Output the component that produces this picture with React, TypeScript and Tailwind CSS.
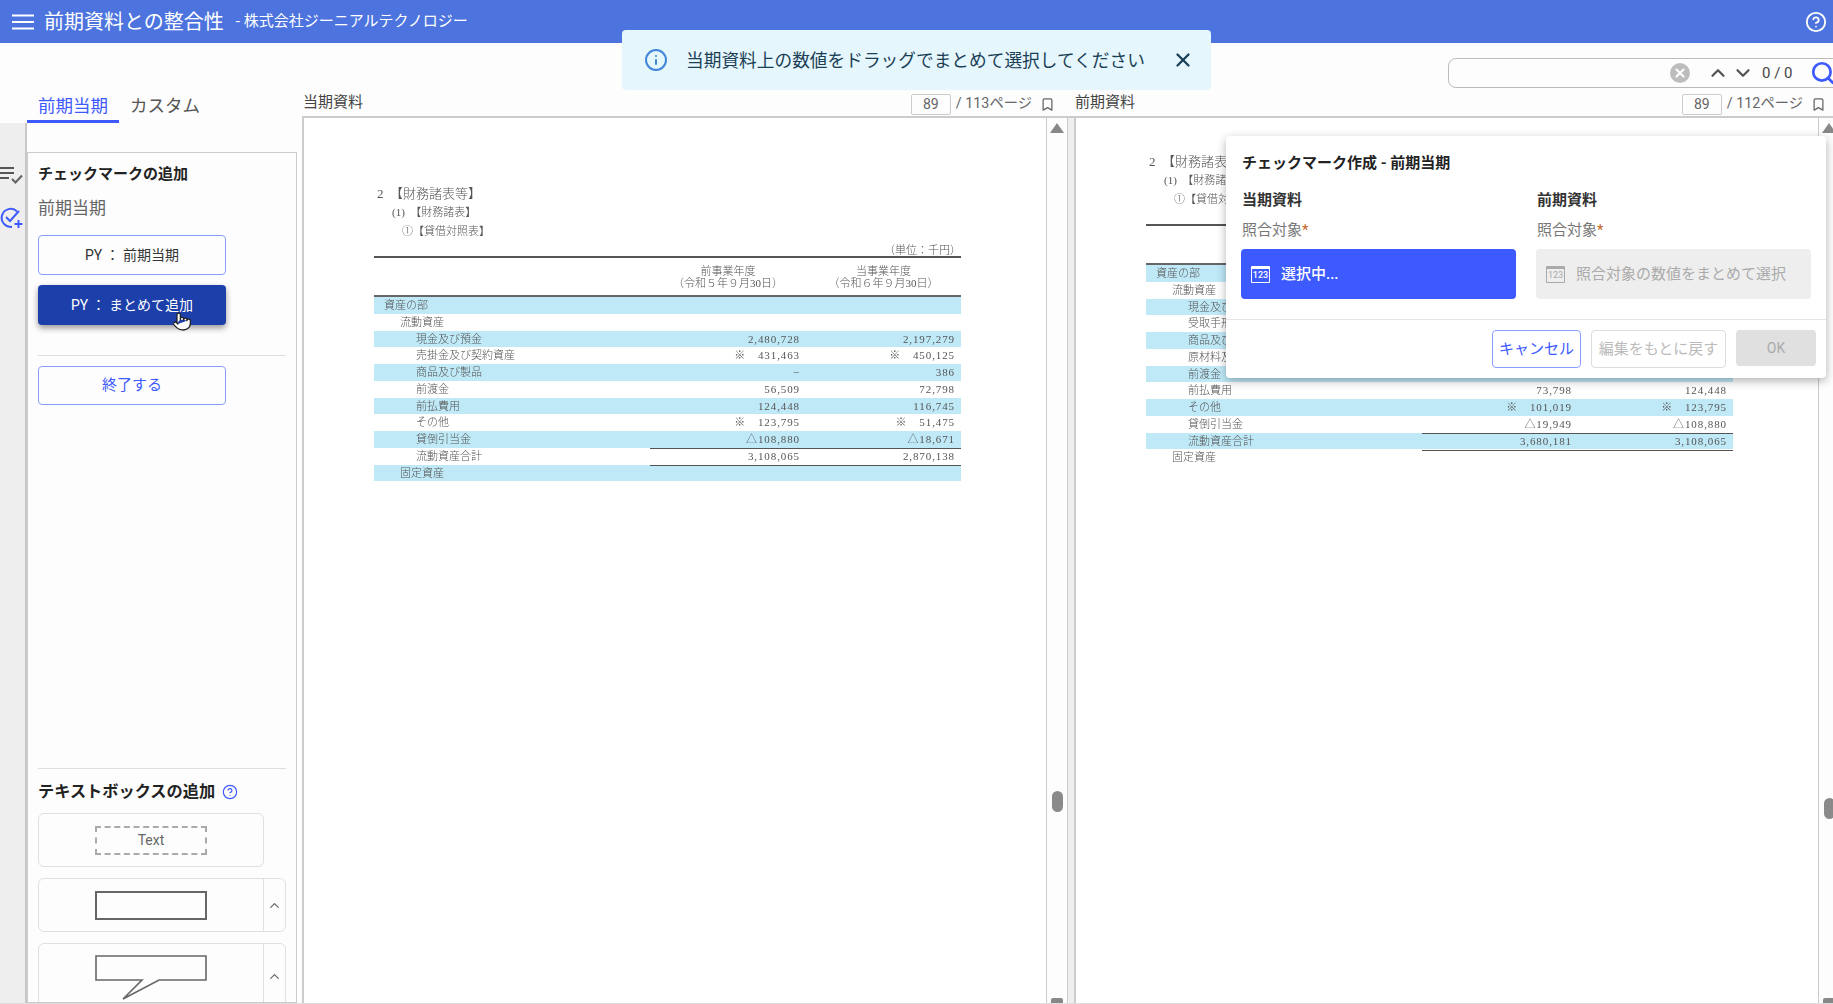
import { Bookmark, ChevronDown, ChevronUp, CircleHelp, Info, Pointer, Search, X } from "lucide-react";

type Row = { label: string; level: number; a?: string; b?: string; ruled?: boolean };

const currentRows: Row[] = [
  { label: "資産の部", level: 0 },
  { label: "流動資産", level: 1 },
  { label: "現金及び預金", level: 2, a: "2,480,728", b: "2,197,279" },
  { label: "売掛金及び契約資産", level: 2, a: "※　431,463", b: "※　450,125" },
  { label: "商品及び製品", level: 2, a: "−", b: "386" },
  { label: "前渡金", level: 2, a: "56,509", b: "72,798" },
  { label: "前払費用", level: 2, a: "124,448", b: "116,745" },
  { label: "その他", level: 2, a: "※　123,795", b: "※　51,475" },
  { label: "貸倒引当金", level: 2, a: "△108,880", b: "△18,671", ruled: true },
  { label: "流動資産合計", level: 2, a: "3,108,065", b: "2,870,138", ruled: true },
  { label: "固定資産", level: 1 },
];

const priorRows: Row[] = [
  { label: "資産の部", level: 0 },
  { label: "流動資産", level: 1 },
  { label: "現金及び預金", level: 2 },
  { label: "受取手形", level: 2 },
  { label: "商品及び製品", level: 2 },
  { label: "原材料及び貯蔵品", level: 2 },
  { label: "前渡金", level: 2 },
  { label: "前払費用", level: 2, a: "73,798", b: "124,448" },
  { label: "その他", level: 2, a: "※　101,019", b: "※　123,795" },
  { label: "貸倒引当金", level: 2, a: "△19,949", b: "△108,880", ruled: true },
  { label: "流動資産合計", level: 2, a: "3,680,181", b: "3,108,065", ruled: true },
  { label: "固定資産", level: 1 },
];

function Statement({ rows }: { rows: Row[] }) {
  return (
    <div className="w-[587px] font-['Liberation_Serif','Noto_Sans_CJK_JP',serif] font-light text-[11px] text-[#555] blur-[0.3px]">
      <div className="h-[19px] pl-[3px] text-[13px] leading-[20px]">2　【財務諸表等】</div>
      <div className="h-[19px] pl-[18px] leading-[19px]">(1)　【財務諸表】</div>
      <div className="h-[19px] pl-[28px] leading-[19px]">①【貸借対照表】</div>
      <div className="mt-[2px] h-[13px] text-right leading-[15px]">（単位：千円）</div>
      <div className="grid h-[41px] grid-cols-[276px_156px_155px] border-y-2 border-b-[#666] border-t-[#555] pt-[7px] text-center leading-[12px]">
        <div />
        <div>前事業年度<br />（令和５年９月30日）</div>
        <div>当事業年度<br />（令和６年９月30日）</div>
      </div>
      {rows.map((r, i) => (
        <div key={r.label} className={`grid h-[16.75px] grid-cols-[276px_156px_155px] leading-[17px] ${i % 2 === 0 ? "bg-[#bfe9f7]" : "bg-white"}`}>
          <div className={r.level === 0 ? "pl-[10px]" : r.level === 1 ? "pl-[26px]" : "pl-[42px]"}>{r.label}</div>
          <div className={`pr-[6px] text-right tracking-[0.9px] ${r.ruled ? "border-b border-[#555]" : ""}`}>{r.a}</div>
          <div className={`pr-[6px] text-right tracking-[0.9px] ${r.ruled ? "border-b border-[#555]" : ""}`}>{r.b}</div>
        </div>
      ))}
    </div>
  );
}

function PageBar({ title, total, right }: { title: string; total: number; right: string }) {
  return (
    <div className={`flex h-[24px] items-center justify-between pl-[1px] ${right}`}>
      <span className="-mt-[3px] text-[15px] text-[#444]">{title}</span>
      <div className="flex items-center">
        <div className="flex h-[21px] w-[40px] items-center justify-center rounded-[2px] border border-[#ccc] text-[14px] text-[#666]">89</div>
        <span className="ml-[5px] text-[14.3px] text-[#666]">/ {total}ページ</span>
        <Bookmark className="ml-[8px] h-[15px] w-[15px] text-[#666]" strokeWidth={2} />
      </div>
    </div>
  );
}

function ScrollTrack({ thumbTop }: { thumbTop: string }) {
  return (
    <div className="flex w-[21px] shrink-0 flex-col items-center border-l border-[#ccc] bg-[#fdfdfd]">
      <svg className="mt-[5px] shrink-0" width="14" height="10" viewBox="0 0 14 10">
        <path d="M7 0 L14 10 L0 10 Z" fill="#888" />
      </svg>
      <div className={`h-[21px] w-[11px] shrink-0 rounded-full bg-[#8a8a8a] ${thumbTop}`} />
      <div className="mt-auto h-[5px] w-[12px] rounded-t-[2px] bg-[#888]" />
    </div>
  );
}

function Icon123({ className }: { className: string }) {
  return (
    <span className={`flex h-[17px] w-[19px] items-center justify-center rounded-[1px] border-x-[1.5px] border-b-[1.5px] border-t-[3px] text-[9px] leading-none ${className}`}>
      123
    </span>
  );
}

function ShapeCard({ children, size }: { children: React.ReactNode; size: string }) {
  return (
    <div className={`flex w-[248px] shrink-0 rounded-[6px] border border-[#e0e0e0] ${size}`}>
      <div className="flex flex-1 justify-center">{children}</div>
      <div className="flex w-[22px] items-center justify-center border-l border-[#e0e0e0]">
        <ChevronUp className="h-[15px] w-[15px] text-[#666]" strokeWidth={2} />
      </div>
    </div>
  );
}

export default function App() {
  return (
    <div className="relative box-border flex h-[1004px] w-[1833px] flex-col overflow-hidden border-b border-[#ddd] bg-[#fdfdfd] font-['Roboto','Noto_Sans_CJK_JP',sans-serif]">
      {/* header */}
      <header className="flex h-[43px] shrink-0 items-center bg-[#4d74de] text-white">
        <svg className="ml-[12px]" width="22" height="16" viewBox="0 0 22 16" stroke="white" strokeWidth="2">
          <path d="M0 1.5h22M0 8h22M0 14.5h22" />
        </svg>
        <span className="ml-[10px] text-[20px]">前期資料との整合性</span>
        <span className="ml-[12px] text-[15px]">- 株式会社ジーニアルテクノロジー</span>
        <CircleHelp className="ml-auto mr-[6px] h-[22px] w-[22px]" strokeWidth={2} />
      </header>

      <div className="flex min-h-0 flex-1">
        {/* sidebar */}
        <aside className="flex w-[302px] shrink-0 flex-col">
          <div className="flex h-[80px] shrink-0 items-end pl-[27px]">
            <div className="h-[37px] w-[92px] border-b-[3px] border-[#3d5afe] pt-[5px] text-center text-[17.5px] leading-[30px] text-[#3d5afe]">前期当期</div>
            <div className="ml-[11px] h-[37px] pt-[5px] text-[17.5px] leading-[30px] text-[#555]">カスタム</div>
          </div>
          <div className="flex min-h-0 flex-1">
            <div className="box-content flex w-[25px] shrink-0 flex-col border-r-2 border-[#c8c8c8] bg-[#eee]">
              <svg className="mt-[42px]" width="24" height="20" viewBox="0 0 24 20" fill="none" stroke="#555" strokeWidth="2">
                <path d="M0 3h14M0 8h14M0 13h9" />
                <path d="M12 14l3.5 3.5L22 10.5" strokeWidth="2.2" stroke="#666" />
              </svg>
              <svg className="mt-[21px]" width="24" height="24" viewBox="0 0 24 24" fill="none" stroke="#3d5afe" strokeWidth="2">
                <path d="M17 5.5A9 9 0 1 0 12 20.8" />
                <path d="M6 11l4 4 9-10" />
                <path d="M18.5 14v8M14.5 18h8" />
              </svg>
            </div>
            <div className="mt-[29px] box-border flex w-[270px] flex-col overflow-hidden border border-[#ccc] px-[10px]">
              <div className="mt-[9px] text-[15px] font-bold leading-[24px] text-[#222]">チェックマークの追加</div>
              <div className="mt-[10px] text-[17px] leading-[24px] text-[#666]">前期当期</div>
              <button className="mt-[15px] h-[40px] w-[188px] shrink-0 rounded-[4px] border border-[#8a9eff] text-[14px] text-[#333]">PY ： 前期当期</button>
              <button className="relative mt-[10px] h-[40px] w-[188px] shrink-0 rounded-[4px] bg-[#1c3faa] text-[14px] text-white shadow-[0_3px_6px_rgba(0,0,0,0.4)]">
                PY ： まとめて追加
                <Pointer className="absolute left-[134px] top-[24px] h-[25px] w-[20px]" fill="white" stroke="#222" strokeWidth={1.5} />
              </button>
              <div className="mt-[30px] h-px w-[248px] shrink-0 bg-[#ddd]" />
              <button className="mt-[10px] h-[39px] w-[188px] shrink-0 rounded-[4px] border border-[#8a9eff] text-[15px] text-[#3d5afe]">終了する</button>
              <div className="mt-[363px] h-px w-[248px] shrink-0 bg-[#ddd]" />
              <div className="mt-[11px] flex shrink-0 items-center">
                <span className="text-[16.2px] font-bold leading-[24px] text-[#222]">テキストボックスの追加</span>
                <CircleHelp className="ml-[7px] h-[16px] w-[16px] text-[#3d5afe]" strokeWidth={1.8} />
              </div>
              <div className="mt-[9px] flex h-[54px] w-[226px] shrink-0 items-center justify-center rounded-[6px] border border-[#e0e0e0]">
                <div className="flex h-[29px] w-[112px] items-center justify-center border-2 border-dashed border-[#aaa] text-[14px] text-[#666]">Text</div>
              </div>
              <ShapeCard size="mt-[11px] h-[54px]">
                <div className="mt-[12px] h-[29px] w-[112px] border-2 border-[#666]" />
              </ShapeCard>
              <ShapeCard size="mt-[11px] h-[66px]">
                <svg className="mt-[11px]" width="112" height="46" viewBox="0 0 112 46" fill="#fdfdfd" stroke="#666" strokeWidth="1.6">
                  <path d="M1 1H111V25H64L28 44L47 25H1Z" />
                </svg>
              </ShapeCard>
            </div>
          </div>
        </aside>

        {/* documents */}
        <main className="flex min-w-0 flex-1 flex-col">
          <div className="-mr-[10px] flex h-[49px] shrink-0 justify-end pt-[15px]">
            <div className="flex h-[30px] w-[395px] items-center rounded-[8px] border border-[#bbb]">
              <span className="ml-[221px] flex h-[20px] w-[20px] items-center justify-center rounded-full bg-[#bdbdbd]">
                <X className="h-[14px] w-[14px] text-white" strokeWidth={3.5} />
              </span>
              <ChevronUp className="ml-[17px] h-[22px] w-[22px] text-[#555]" strokeWidth={2.5} />
              <ChevronDown className="ml-[3px] h-[22px] w-[22px] text-[#555]" strokeWidth={2.5} />
              <span className="ml-[8px] text-[15px] text-[#444]">0 / 0</span>
              <Search className="ml-[17px] h-[26px] w-[26px] text-[#3d5afe]" strokeWidth={2.5} />
            </div>
          </div>
          <div className="flex min-h-0 flex-1">
            <section className="flex w-[772px] shrink-0 flex-col">
              <PageBar title="当期資料" total={113} right="pr-[19px]" />
              <div className="flex min-h-0 flex-1 border-t-2 border-[#ccc]">
                <div className="min-w-0 flex-1 border-l-2 border-[#ccc] bg-white pl-[70px] pt-[66px]">
                  <Statement rows={currentRows} />
                </div>
                <ScrollTrack thumbTop="mt-[658px]" />
                <div className="w-[7px] shrink-0 border-l border-[#ccc] bg-[#eee]" />
              </div>
            </section>
            <section className="flex min-w-0 flex-1 flex-col">
              <PageBar title="前期資料" total={112} right="pr-[7px]" />
              <div className="flex min-h-0 flex-1 border-t-2 border-[#ccc]">
                <div className="w-[744px] shrink-0 border-l-2 border-[#ccc] bg-white pl-[70px] pt-[34px]">
                  <Statement rows={priorRows} />
                </div>
                <ScrollTrack thumbTop="mt-[665px]" />
              </div>
            </section>
          </div>
        </main>
      </div>

      {/* toast */}
      <div className="absolute left-[622px] top-[30px] flex h-[60px] w-[589px] items-center rounded-[4px] bg-[#e5f6fd] text-[#1b3f55]">
        <Info className="ml-[22px] h-[24px] w-[24px] text-[#3f86d9]" strokeWidth={2} />
        <span className="ml-[18px] pt-[2px] text-[17.7px]">当期資料上の数値をドラッグでまとめて選択してください</span>
        <X className="ml-auto mr-[17px] h-[22px] w-[22px]" strokeWidth={2.5} />
      </div>

      {/* dialog */}
      <div className="absolute left-[1226px] top-[136px] flex h-[242px] w-[600px] flex-col rounded-[4px] bg-white shadow-[0_3px_10px_rgba(0,0,0,0.3)]">
        <div className="pl-[16px] pt-[16px] text-[15px] font-bold leading-[22px] text-[#222]">チェックマーク作成 - 前期当期</div>
        <div className="mt-[15px] grid grid-cols-[275px_275px] gap-x-[20px] pl-[15px]">
          <div>
            <div className="pl-px text-[15px] font-bold leading-[22px] text-[#333]">当期資料</div>
            <div className="mt-[8px] pl-px text-[15px] leading-[22px] text-[#777]">照合対象<span className="text-[#c8641e]">*</span></div>
            <div className="mt-[8px] flex h-[50px] items-center rounded-[4px] bg-[#3d5afe] pl-[10px] text-[15px] font-medium text-white">
              <Icon123 className="border-white" />
              <span className="ml-[11px]">選択中...</span>
            </div>
          </div>
          <div>
            <div className="pl-px text-[15px] font-bold leading-[22px] text-[#333]">前期資料</div>
            <div className="mt-[8px] pl-px text-[15px] leading-[22px] text-[#777]">照合対象<span className="text-[#c8641e]">*</span></div>
            <div className="mt-[8px] flex h-[50px] items-center rounded-[4px] bg-[#eee] pl-[10px] text-[15px] text-[#aaa]">
              <Icon123 className="border-[#aaa]" />
              <span className="ml-[11px]">照合対象の数値をまとめて選択</span>
            </div>
          </div>
        </div>
        <div className="mt-[20px] h-px bg-[#e6e6e6]" />
        <div className="flex justify-end gap-[10px] pr-[10px] pt-[10px]">
          <button className="h-[38px] w-[89px] rounded-[4px] border border-[#8a9eff] text-[15px] text-[#3d5afe]">キャンセル</button>
          <button className="h-[38px] w-[135px] rounded-[4px] border border-[#ddd] text-[15px] text-[#bbb]">編集をもとに戻す</button>
          <button className="h-[36px] w-[80px] rounded-[4px] bg-[#e0e0e0] text-[14px] text-[#aaa]">OK</button>
        </div>
      </div>
    </div>
  );
}
